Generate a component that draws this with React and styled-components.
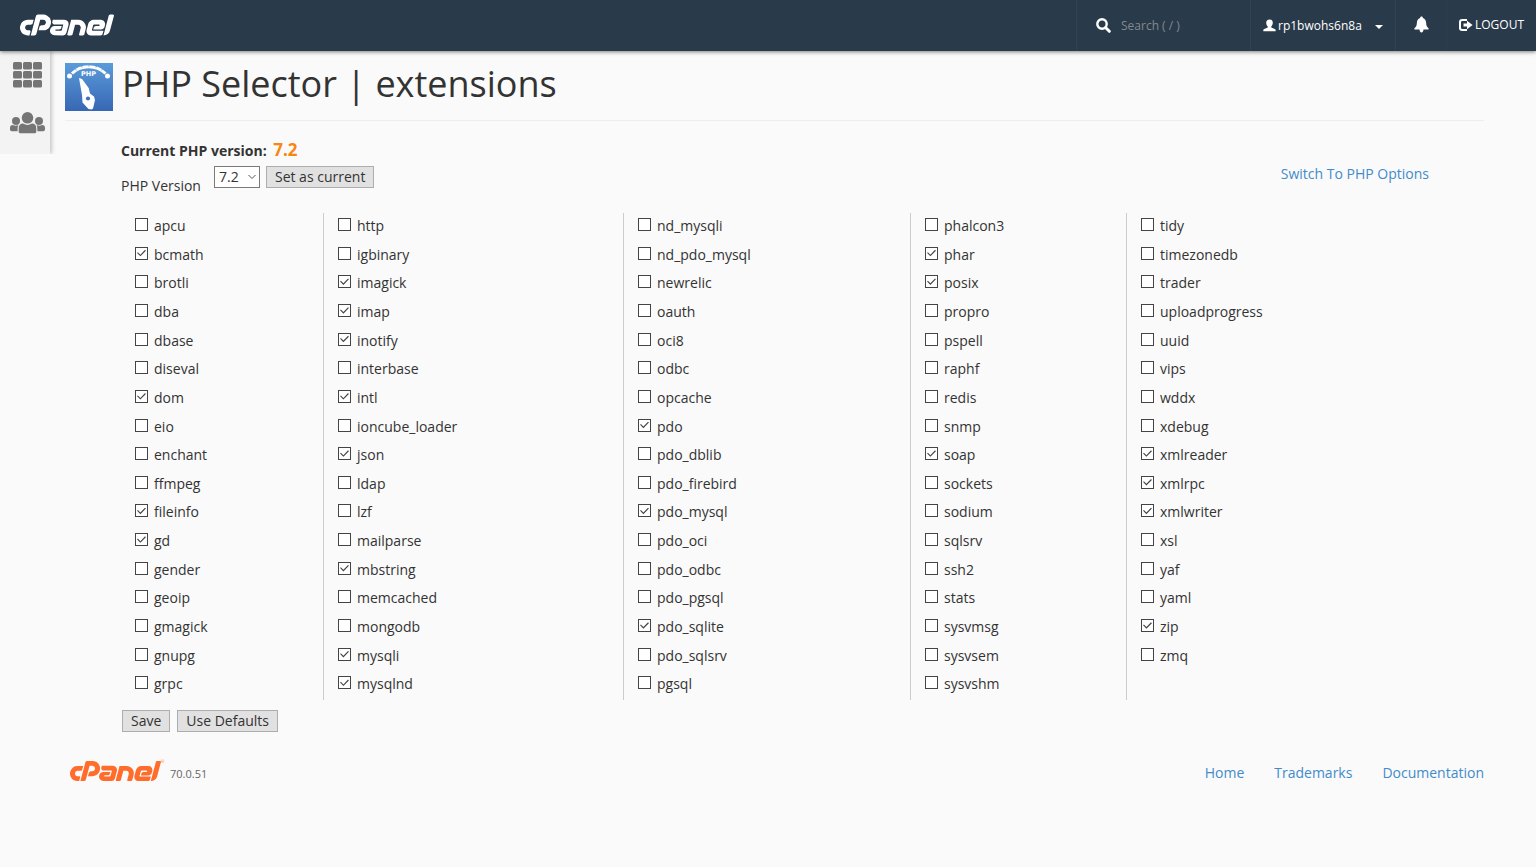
import React, { useState } from "react";
import styled, { createGlobalStyle } from "styled-components";
import { SiCpanel } from "react-icons/si";

const GlobalStyle = createGlobalStyle`
  *, *::before, *::after { box-sizing: border-box; }
  body {
    margin: 0;
    background: #fafafa;
    color: #333;
    font: 14px/20px "Open Sans", "Noto Sans", sans-serif;
  }
  button, input, select { font: inherit; color: inherit; }
`;

const Header = styled.header`
  position: relative;
  z-index: 2;
  display: flex;
  justify-content: space-between;
  height: 51px;
  background: #293a4a;
  color: #fff;
  font-size: 12px;
  box-shadow: 0 1px 4px rgba(0, 0, 0, 0.5);
`;

const Brand = styled.a`
  display: flex;
  align-items: center;
  padding: 0 0 2px 20px;
  color: #fff;
`;

const Wordmark = styled(SiCpanel).attrs({ viewBox: "0 9 24 6", "aria-label": "cPanel", role: "img" })`
  display: block;
  width: ${(p) => p.$width}px;
  height: 24px;
`;

const Tools = styled.div`
  display: flex;
`;

const Tool = styled.div`
  display: flex;
  align-items: center;
  width: ${(p) => p.$width}px;
  padding-left: ${(p) => p.$pad}px;
  border-left: 1px solid ${(p) => (p.$faint ? "#2b3d4e" : "#304254")};
`;

const SearchBox = styled.input`
  width: 110px;
  margin-left: 10px;
  padding: 0;
  border: 0;
  background: none;
  outline: none;
  &::placeholder { color: #84898d; opacity: 1; }
`;

const ToolButton = styled.button`
  display: flex;
  align-items: center;
  gap: 2px;
  padding: 0;
  border: 0;
  background: none;
`;

const ToolLink = styled(ToolButton).attrs({ as: "a" })`
  color: #fff;
  text-decoration: none;
  padding-bottom: 2px;
`;

const Caret = styled.span`
  margin: 2px 0 0 11px;
  border: 4px solid transparent;
  border-top-color: #fff;
  border-bottom: 0;
`;

const Body = styled.div`
  display: flex;
  align-items: flex-start;
`;

const Sidebar = styled.nav`
  display: flex;
  flex-direction: column;
  align-items: center;
  gap: 25px;
  flex: none;
  width: 50px;
  padding: 11px 0 19px 5px;
  background: #f3f3f3;
  color: #757575;
  box-shadow: 2px 0 4px rgba(0, 0, 0, 0.2);
  clip-path: inset(0 -8px 0 0);
`;

const SideLink = styled.a`
  display: block;
  height: 24px;
  color: inherit;
  svg { display: block; }
`;

const Main = styled.main`
  flex: 1;
  padding: 0 52px 0 15px;
`;

const TitleBar = styled.div`
  display: flex;
  gap: 9px;
  height: 70px;
  padding-top: 12px;
  border-bottom: 1px solid #eee;
  svg { flex: none; }
`;

const Title = styled.h1`
  margin: 0;
  font-size: 36px;
  line-height: 42px;
  font-weight: 400;
`;

const Form = styled.form`
  padding: 17px 55px 0 56px;
`;

const Current = styled.div`
  font-weight: 700;
  line-height: 24px;
`;

const Version = styled.strong`
  margin-left: 3px;
  color: #f98512;
  font-size: 17px;
  font-weight: 700;
`;

const VersionRow = styled.div`
  display: flex;
  align-items: flex-start;
  margin-top: 3px;
  height: 47px;
`;

const VersionLabel = styled.label`
  padding-top: 10px;
  margin-right: 13px;
`;

const SelectWrap = styled.span`
  position: relative;
  display: block;
  margin-right: 6px;
  svg { position: absolute; right: 4px; top: 8px; pointer-events: none; }
`;

const Select = styled.select`
  display: block;
  appearance: none;
  width: 46px;
  height: 22px;
  padding: 0 4px;
  border: 1px solid #7a7a7a;
  border-radius: 0;
  background: #fff;
  line-height: 20px;
`;

const Button = styled.button`
  height: 22px;
  padding: 0 8px;
  border: 1px solid #adadad;
  background: #e1e1e1;
  line-height: 20px;
`;

const Link = styled.a`
  color: #428bca;
  text-decoration: none;
`;

const SwitchLink = styled(Link)`
  margin: -2px 0 0 auto;
`;

const Columns = styled.div`
  display: grid;
  grid-template-columns: 202fr 300fr 287fr 216fr 303fr;
  min-height: 487px;
`;

const Column = styled.div`
  display: grid;
  grid-template-rows: repeat(17, 1fr);
  padding-left: 14px;
  border-left: ${(p) => (p.$first ? "0" : "1px solid #ccc")};
`;

const Extension = styled.label`
  display: flex;
  align-items: flex-start;
  gap: 6px;
  padding-top: 3px;
`;

const Check = styled.input.attrs({ type: "checkbox" })`
  appearance: none;
  flex: none;
  width: 13px;
  height: 13px;
  margin: 2px 0 0;
  border: 1px solid #444;
  background: #fff;
  &:checked::before {
    content: "";
    display: block;
    width: 11px;
    height: 11px;
    background: #444;
    clip-path: polygon(10% 48%, 17% 41%, 40% 64%, 82% 20%, 90% 28%, 40% 79%);
  }
`;

const Actions = styled.div`
  display: flex;
  gap: 7px;
  padding: 10px 0 0 1px;
`;

const Footer = styled.footer`
  display: flex;
  align-items: center;
  margin-top: 26px;
  padding-left: 5px;
  color: #ff6c2c;
`;

const Mark = styled.sup`
  align-self: flex-start;
  width: 3px;
  font-size: 4px;
  line-height: 8px;
`;

const Release = styled.span`
  margin: 6px auto 0 6px;
  color: #666;
  font-size: 11px;
`;

const FooterLinks = styled.nav`
  display: flex;
  gap: 30px;
  padding-top: 4px;
`;

const columns = [
  "apcu *bcmath brotli dba dbase diseval *dom eio enchant ffmpeg *fileinfo *gd gender geoip gmagick gnupg grpc",
  "http igbinary *imagick *imap *inotify interbase *intl ioncube_loader *json ldap lzf mailparse *mbstring memcached mongodb *mysqli *mysqlnd",
  "nd_mysqli nd_pdo_mysql newrelic oauth oci8 odbc opcache *pdo pdo_dblib pdo_firebird *pdo_mysql pdo_oci pdo_odbc pdo_pgsql *pdo_sqlite pdo_sqlsrv pgsql",
  "phalcon3 *phar *posix propro pspell raphf redis snmp *soap sockets sodium sqlsrv ssh2 stats sysvmsg sysvsem sysvshm",
  "tidy timezonedb trader uploadprogress uuid vips wddx xdebug *xmlreader *xmlrpc *xmlwriter xsl yaf yaml *zip zmq",
].map((c) => c.split(" ").map((n) => ({ name: n.replace("*", ""), on: n[0] === "*" })));

const SearchIcon = () => (
  <svg width="15" height="15" viewBox="0 0 15 15" fill="none" stroke="#fff" aria-hidden="true">
    <circle cx="6" cy="6" r="4.7" strokeWidth="2.4" />
    <path d="M9.5 9.5 13.3 13.3" strokeWidth="3" strokeLinecap="round" />
  </svg>
);

const UserIcon = () => (
  <svg width="13" height="13" viewBox="0 0 13 13" fill="#fff" aria-hidden="true">
    <path d="M6.5.5C4.300.5 3.200 1.800 3.200 3.700c0 1.500.6 2.900 1.500 3.600v1.200L1.300 10C.4 10.400.3 11.100.3 12.300h12.400c0-1.200-.1-1.900-1-2.300L8.300 8.500V7.300c.9-.7 1.500-2.100 1.500-3.600C9.800 1.800 8.700.5 6.500.5Z" />
  </svg>
);

const BellIcon = () => (
  <svg width="15" height="17" viewBox="0 0 15 17" fill="#fff" role="img" aria-label="Notifications">
    <path d="M7.5.5c.9 0 1.400.6 1.400 1.500 2.100.7 3 2.200 3.200 4.500.2 3 .6 4.200 2.200 5.600.5.500.6 1.400 0 1.400H.7c-.6 0-.5-.9 0-1.400 1.600-1.400 2-2.600 2.200-5.600C3.100 4.200 4 2.700 6.100 2c0-.9.500-1.500 1.400-1.500ZM5.500 13.200h4c0 2-.8 3.200-2 3.200s-2-1.200-2-3.200Z" />
  </svg>
);

const LogoutIcon = () => (
  <svg width="14" height="12" viewBox="0 0 14 12" aria-hidden="true">
    <path d="M8 1H3.200Q1 1 1 3.200v5.600Q1 11 3.200 11H8" fill="none" stroke="#fff" strokeWidth="2" />
    <path d="M4.500 4.500H8V1.800L13.600 6 8 10.200V7.500H4.500Z" fill="#fff" />
  </svg>
);

const GridIcon = () => (
  <svg width="29" height="26" viewBox="0 0 29 26" fill="currentColor" role="img" aria-label="Home">
    {[0, 9, 18].map((y) => [0, 10, 20].map((x) => (
      <rect key={`${x}-${y}`} x={x} y={y} width="9" height="7.5" rx="1.5" />
    )))}
  </svg>
);

const UsersIcon = () => (
  <svg width="36" height="23" viewBox="0 0 36 23" fill="currentColor" role="img" aria-label="User Manager">
    <circle cx="17.500" cy="6.800" r="5.800" />
    <path d="M8.700 20.500V17.500c0-3.200 1.600-4.900 4.300-4.900 2.800 1.700 6.200 1.700 9 0 2.700 0 4.300 1.700 4.300 4.900v3c0 1.200-.6 1.800-1.800 1.800h-14c-1.200 0-1.800-.6-1.800-1.800Z" />
    <circle cx="6" cy="10" r="4" />
    <circle cx="29" cy="10" r="4" />
    <path d="M0 18.500V17c0-2 1-3.100 2.800-3.100 1.900 1 3.700 1 5.600 0-.6 1.100-.8 2.300-.8 6.400H1.800Q0 20.300 0 18.500ZM35 18.500V17c0-2-1-3.100-2.800-3.100-1.900 1-3.700 1-5.600 0 .6 1.100.8 2.300.8 6.400h5.800Q35 20.300 35 18.500Z" />
  </svg>
);

const SelectorIcon = () => (
  <svg width="48" height="48" viewBox="0 0 48 48" aria-hidden="true">
    <defs>
      <linearGradient id="sky" x1="0" y1="0" x2="0" y2="1">
        <stop offset="0" stopColor="#5b9bd9" />
        <stop offset="1" stopColor="#3767b4" />
      </linearGradient>
    </defs>
    <rect width="48" height="48" fill="url(#sky)" />
    <path d="M7 10.500C16 1.500 31 1.500 40.500 10.500" fill="none" stroke="#fff" strokeWidth="3" />
    <path d="M10.500 6l1 1.500M16.500 3l.6 1.500M24 2v1.500M31.500 3l-.6 1.500M37.500 6l-1 1.500" stroke="#5a99d7" strokeWidth=".8" />
    <circle cx="4.500" cy="13" r="2.500" fill="#fff" />
    <circle cx="42.500" cy="13" r="2.500" fill="#fff" />
    <text x="23.500" y="13" fill="#fff" textAnchor="middle" fontFamily="DejaVu Sans, sans-serif" fontSize="6.500" fontWeight="700">PHP</text>
    <path d="M14 15 17 16 23.700 25 25 30.500 29 33.500 30 37 28 45.500 26.500 46.500 23.500 46 17.500 39.500 17 32Z" fill="#fff" />
    <circle cx="23" cy="35.500" r="2.100" fill="#3e72bd" />
  </svg>
);

function ExtensionItem({ name, on }) {
  const [checked, setChecked] = useState(on);
  return (
    <Extension>
      <Check checked={checked} onChange={(e) => setChecked(e.target.checked)} />
      {name}
    </Extension>
  );
}

export default function App() {
  return (
    <>
      <GlobalStyle />
      <Header>
        <Brand href="#home"><Wordmark $width={94} /></Brand>
        <Tools>
          <Tool $width={174} $pad={19}>
            <SearchIcon />
            <SearchBox type="text" placeholder="Search ( / )" aria-label="Search" />
          </Tool>
          <Tool $width={145} $pad={12}>
            <ToolButton type="button"><UserIcon />rp1bwohs6n8a<Caret /></ToolButton>
          </Tool>
          <Tool $width={51} $pad={18}>
            <ToolLink href="#notifications"><BellIcon /></ToolLink>
          </Tool>
          <Tool $width={90} $pad={12} $faint>
            <ToolLink href="#logout"><LogoutIcon />LOGOUT</ToolLink>
          </Tool>
        </Tools>
      </Header>
      <Body>
        <Sidebar>
          <SideLink href="#home"><GridIcon /></SideLink>
          <SideLink href="#users"><UsersIcon /></SideLink>
        </Sidebar>
        <Main>
          <TitleBar>
            <SelectorIcon />
            <Title>PHP Selector | extensions</Title>
          </TitleBar>
          <Form onSubmit={(e) => e.preventDefault()}>
            <Current>Current PHP version: <Version>7.2</Version></Current>
            <VersionRow>
              <VersionLabel htmlFor="version">PHP Version</VersionLabel>
              <SelectWrap>
                <Select id="version" defaultValue="7.2"><option>7.2</option></Select>
                <svg width="8" height="6" viewBox="0 0 8 6" fill="none" stroke="#555" aria-hidden="true"><path d="M.5 1 4 4.500 7.500 1" /></svg>
              </SelectWrap>
              <Button type="button">Set as current</Button>
              <SwitchLink href="#options">Switch To PHP Options</SwitchLink>
            </VersionRow>
            <Columns>
              {columns.map((items, i) => (
                <Column key={i} $first={i === 0}>
                  {items.map((item) => <ExtensionItem key={item.name} {...item} />)}
                </Column>
              ))}
            </Columns>
            <Actions>
              <Button type="submit">Save</Button>
              <Button type="button">Use Defaults</Button>
            </Actions>
          </Form>
          <Footer>
            <Wordmark $width={91} />
            <Mark>®</Mark>
            <Release>70.0.51</Release>
            <FooterLinks>
              <Link href="#home">Home</Link>
              <Link href="#trademarks">Trademarks</Link>
              <Link href="#docs">Documentation</Link>
            </FooterLinks>
          </Footer>
        </Main>
      </Body>
    </>
  );
}
